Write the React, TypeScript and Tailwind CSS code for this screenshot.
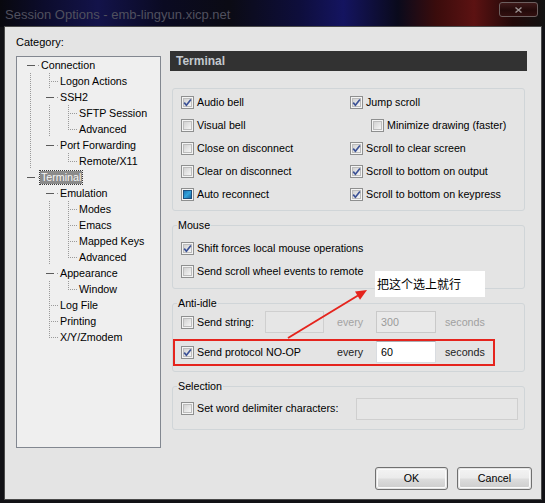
import React from 'react';

type TNode = { label: string; level: number; exp?: boolean; last?: boolean; sel?: boolean; cont: boolean[] };

const nodes: TNode[] = [
  { label: 'Connection', level: 0, exp: true, cont: [] },
  { label: 'Logon Actions', level: 1, cont: [true] },
  { label: 'SSH2', level: 1, exp: true, cont: [true] },
  { label: 'SFTP Session', level: 2, cont: [true, true] },
  { label: 'Advanced', level: 2, last: true, cont: [true, true] },
  { label: 'Port Forwarding', level: 1, exp: true, last: true, cont: [true] },
  { label: 'Remote/X11', level: 2, last: true, cont: [true, false] },
  { label: 'Terminal', level: 0, exp: true, last: true, sel: true, cont: [] },
  { label: 'Emulation', level: 1, exp: true, cont: [false] },
  { label: 'Modes', level: 2, cont: [false, true] },
  { label: 'Emacs', level: 2, cont: [false, true] },
  { label: 'Mapped Keys', level: 2, cont: [false, true] },
  { label: 'Advanced', level: 2, last: true, cont: [false, true] },
  { label: 'Appearance', level: 1, exp: true, cont: [false] },
  { label: 'Window', level: 2, last: true, cont: [false, true] },
  { label: 'Log File', level: 1, cont: [false] },
  { label: 'Printing', level: 1, cont: [false] },
  { label: 'X/Y/Zmodem', level: 1, last: true, cont: [false] },
];

const LINE = '#9a9a9a';

function Guide({ n }: { n: TNode }) {
  const W = 23 + 19 * n.level;
  const x0 = 13 + 19 * n.level;
  return (
    <svg width={W} height={16} className="shrink-0 block">
      {n.cont.map((c, a) =>
        c ? (
          <line key={a} x1={13.5 + 19 * a} y1={0} x2={13.5 + 19 * a} y2={16} stroke={LINE} strokeDasharray="1 1" />
        ) : null
      )}
      {n.exp ? (
        <>
          <line x1={x0 - 3} y1={8.5} x2={x0 + 5} y2={8.5} stroke="#5a5a5a" />
          <line x1={x0 + 8} y1={8.5} x2={W} y2={8.5} stroke={LINE} strokeDasharray="1 1" />
        </>
      ) : (
        <>
          <line x1={x0 + 0.5} y1={0} x2={x0 + 0.5} y2={n.last ? 9 : 16} stroke={LINE} strokeDasharray="1 1" />
          <line x1={x0 + 2} y1={8.5} x2={W} y2={8.5} stroke={LINE} strokeDasharray="1 1" />
        </>
      )}
    </svg>
  );
}

function Check({ checked, mixed }: { checked?: boolean; mixed?: boolean }) {
  return (
    <svg width={13} height={13} className="shrink-0 block">
      <rect x={0.5} y={0.5} width={12} height={12} fill="#f4f4f4" stroke="#8e8f8f" />
      <rect x={2.5} y={2.5} width={8} height={8} fill="url(#cbInner)" stroke="#bcbcbc" />
      {checked && (
        <path d="M3.2 6.6 L5.4 9.2 L9.9 3.4" fill="none" stroke="#3c5296" strokeWidth={1.7} />
      )}
      {mixed && <rect x={2.5} y={2.5} width={8} height={8} fill="url(#cbMixed)" stroke="#1d4f7e" />}
    </svg>
  );
}

function CB({ label, checked, mixed, className }: { label: string; checked?: boolean; mixed?: boolean; className?: string }) {
  return (
    <div className={'flex items-center gap-[3px] h-[23px] ' + (className ?? '')}>
      <Check checked={checked} mixed={mixed} />
      <span className="leading-[13px] whitespace-nowrap">{label}</span>
    </div>
  );
}

function Btn({ label, w }: { label: string; w: string }) {
  return (
    <div className={'h-[23px] rounded-[3px] border border-[#707070] p-[1px] ' + w}>
      <div className="h-full w-full rounded-[2px] border border-[#fbfbfb] bg-[linear-gradient(180deg,#f2f2f2_0%,#ebebeb_48%,#dddddd_52%,#cfcfcf_100%)] flex items-center justify-center leading-[13px]">
        {label}
      </div>
    </div>
  );
}

export default function App() {
  return (
    <div className="relative w-[545px] h-[503px] overflow-hidden bg-[#121216] font-['Liberation_Sans',Arial,sans-serif] text-[10.7px] text-black">
      <svg width="0" height="0" className="block absolute">
        <defs>
          <linearGradient id="cbInner" x1="0" y1="0" x2="1" y2="1">
            <stop offset="0" stopColor="#cfcfcf" />
            <stop offset="1" stopColor="#f8f8f8" />
          </linearGradient>
          <linearGradient id="cbMixed" x1="0" y1="0" x2="1" y2="1">
            <stop offset="0" stopColor="#1c6fb0" />
            <stop offset="0.5" stopColor="#32a3dc" />
            <stop offset="1" stopColor="#1a5e98" />
          </linearGradient>
        </defs>
      </svg>

      {/* title bar */}
      <div className="h-[27px] flex items-start justify-between bg-[linear-gradient(90deg,#08080e_0%,#0c0c2c_8%,#13134a_18%,#0a0a22_30%,#0b0b14_42%,#0e0e3c_55%,#141460_63%,#0a0a1c_73%,#3a0c0c_80%,#5c1212_87%,#220909_94%,#121212_100%)]">
        <div className="pl-[5px] pt-[7px] text-[13px] leading-[16px] text-[#50505e] whitespace-nowrap">
          Session Options - emb-lingyun.xicp.net
        </div>
        <div className="mt-[2px] mr-[7px] w-[39px] h-[15px] rounded-[3px] border border-[#6d5f5f] bg-[linear-gradient(180deg,#3e1a1a_0%,#240a0a_55%,#321010_100%)] flex items-center justify-center">
          <svg width={7} height={6} className="block">
            <path d="M0.5 0.5 L6.5 5.5 M6.5 0.5 L0.5 5.5" stroke="#9a9090" strokeWidth={1.4} />
          </svg>
        </div>
      </div>

      {/* client */}
      <div className="ml-[5px] w-[536px] h-[472px] bg-[#e4e4e4] flex flex-col shadow-[0_0_0_1px_#4a4a4a]">
        <div className="flex">
          {/* left column */}
          <div className="pl-[11px] pt-[9px]">
            <div className="leading-[13px] text-[11px]">Category:</div>
            <div className="mt-[7px] w-[145px] h-[392px] border border-[#828790] bg-[#efefef]">
              {nodes.map((n, i) => (
                <div key={i} className="flex items-center h-[16px]">
                  <Guide n={n} />
                  <span
                    className={
                      'leading-[13px] px-[1px] whitespace-nowrap ' +
                      (n.sel ? 'bg-[#8b8b8b] text-[#f4f4f4] outline-1 outline-dotted outline-[#3a3a3a]' : '')
                    }
                  >
                    {n.label}
                  </span>
                </div>
              ))}
            </div>
          </div>

          {/* right column */}
          <div className="ml-[9px] pt-[24px] w-[357px]">
            <div className="h-[20px] bg-[#323232] flex items-center pl-[6px] text-[12px] font-bold text-[#c3c8ce]">
              Terminal
            </div>

            <div className="mt-[17px] mx-[2px] border border-[#d0d5d8] rounded-[3px] pt-[2px] pb-[4px] pl-[8px] grid grid-cols-[169px_1fr]">
              <CB label="Audio bell" checked />
              <CB label="Jump scroll" checked />
              <CB label="Visual bell" />
              <CB label="Minimize drawing (faster)" className="pl-[21px]" />
              <CB label="Close on disconnect" />
              <CB label="Scroll to clear screen" checked />
              <CB label="Clear on disconnect" />
              <CB label="Scroll to bottom on output" checked />
              <CB label="Auto reconnect" mixed />
              <CB label="Scroll to bottom on keypress" checked />
            </div>

            <fieldset className="mt-[8px] mx-[2px] border border-[#d0d5d8] rounded-[3px] p-0">
              <legend className="ml-[4px] px-[1px] leading-[13px]">Mouse</legend>
              <div className="pl-[8px] pt-[5px] pb-[5px] flex flex-col">
                <CB label="Shift forces local mouse operations" checked className="h-[22px]" />
                <CB label="Send scroll wheel events to remote" className="h-[22px]" />
              </div>
            </fieldset>

            <fieldset className="mt-[8px] mx-[2px] border border-[#d0d5d8] rounded-[3px] p-0">
              <legend className="ml-[4px] px-[1px] leading-[13px]">Anti-idle</legend>
              <div className="pl-[8px] pt-[1px] pb-[8px] flex flex-col gap-[8px]">
                <div className="flex items-center h-[22px]">
                  <CB label="Send string:" className="w-[84px] h-[22px]" />
                  <div className="w-[59px] h-[22px] border border-[#cfcfcf] bg-[#e6e6e6]" />
                  <div className="w-[52px] pl-[13px] text-[#a3a3a3] leading-[13px]">every</div>
                  <div className="w-[60px] h-[22px] border border-[#c9c9c9] bg-[#e9e9e9] pl-[4px] pt-[4px] leading-[13px] text-[#9a9a9a]">
                    300
                  </div>
                  <div className="pl-[9px] text-[#a0a0a0] leading-[13px]">seconds</div>
                </div>
                <div className="flex items-center h-[22px]">
                  <CB label="Send protocol NO-OP" checked className="w-[156px] h-[22px]" />
                  <div className="w-[39px] leading-[13px] text-[#222]">every</div>
                  <div className="w-[60px] h-[22px] border border-[#d9dce0] border-t-[#abadb3] bg-white pl-[4px] pt-[4px] leading-[13px]">
                    60
                  </div>
                  <div className="pl-[9px] leading-[13px] text-[#222]">seconds</div>
                </div>
              </div>
            </fieldset>

            <fieldset className="mt-[8px] mx-[2px] border border-[#d0d5d8] rounded-[3px] p-0">
              <legend className="ml-[4px] px-[1px] leading-[13px]">Selection</legend>
              <div className="pl-[8px] pt-[4px] pb-[9px] flex items-center">
                <CB label="Set word delimiter characters:" className="w-[175px] h-[22px]" />
                <div className="w-[162px] h-[22px] border border-[#cfcfcf] bg-[#e6e6e6]" />
              </div>
            </fieldset>
          </div>
        </div>

        <div className="mt-auto flex justify-end gap-[9px] pr-[9px] pb-[9px]">
          <Btn label="OK" w="w-[73px]" />
          <Btn label="Cancel" w="w-[75px]" />
        </div>
      </div>

      {/* annotation overlay */}
      <div className="absolute left-[173px] top-[339px] w-[322px] h-[27px] border-2 border-[#e5241d] pointer-events-none" />
      <svg width={545} height={503} className="absolute left-0 top-0 pointer-events-none">
        <line x1={288} y1={338} x2={358} y2={295.5} stroke="#e5241d" strokeWidth={2} />
        <polygon points="367,290 360,299.8 355,291.5" fill="#e5241d" />
      </svg>
      <div className="absolute left-[375px] top-[271px] w-[110px] h-[26px] bg-white pl-[2px] flex items-center text-[12px] leading-[14px] font-['Noto_Sans_CJK_SC',sans-serif] text-black">
        把这个选上就行
      </div>
    </div>
  );
}
